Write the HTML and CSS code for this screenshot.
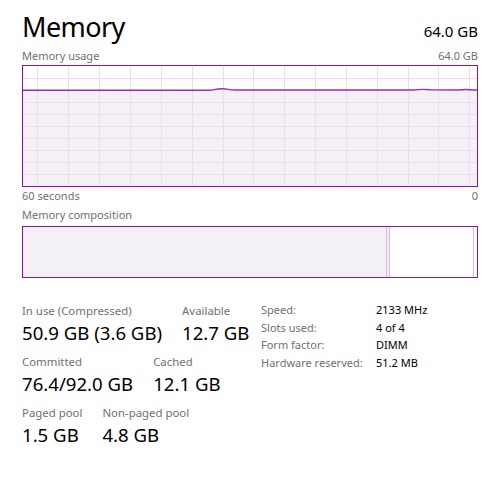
FILE: index.html
```html
<!DOCTYPE html>
<html>
<head>
<meta charset="utf-8">
<link rel="stylesheet" href="styles.css">
</head>
<body>
<div class="page">
  <div class="header">
    <div class="title">Memory</div>
    <div class="total">64.0 GB</div>
  </div>
  <div class="caption-row top-caption">
    <span>Memory usage</span>
    <span>64.0 GB</span>
  </div>
  <svg class="chart" width="456" height="122" viewBox="0 0 456 122">
    <rect x="0" y="25" width="456" height="97" fill="#f3f1f5"/>
    <g stroke="#ebdcf1" stroke-width="1">
      <line x1="0" y1="13.5" x2="456" y2="13.5"/>
      <line x1="0" y1="37.5" x2="456" y2="37.5"/>
      <line x1="0" y1="49.5" x2="456" y2="49.5"/>
      <line x1="0" y1="61.5" x2="456" y2="61.5"/>
      <line x1="0" y1="73.5" x2="456" y2="73.5"/>
      <line x1="0" y1="85.5" x2="456" y2="85.5"/>
      <line x1="0" y1="97.5" x2="456" y2="97.5"/>
      <line x1="0" y1="109.5" x2="456" y2="109.5"/>
      <line x1="15.5" y1="0" x2="15.5" y2="122"/>
      <line x1="46.5" y1="0" x2="46.5" y2="122"/>
      <line x1="77.5" y1="0" x2="77.5" y2="122"/>
      <line x1="108.5" y1="0" x2="108.5" y2="122"/>
      <line x1="139.5" y1="0" x2="139.5" y2="122"/>
      <line x1="170.5" y1="0" x2="170.5" y2="122"/>
      <line x1="201.5" y1="0" x2="201.5" y2="122"/>
      <line x1="231.5" y1="0" x2="231.5" y2="122"/>
      <line x1="262.5" y1="0" x2="262.5" y2="122"/>
      <line x1="293.5" y1="0" x2="293.5" y2="122"/>
      <line x1="324.5" y1="0" x2="324.5" y2="122"/>
      <line x1="355.5" y1="0" x2="355.5" y2="122"/>
      <line x1="386.5" y1="0" x2="386.5" y2="122"/>
      <line x1="416.5" y1="0" x2="416.5" y2="122"/>
      <line x1="447.5" y1="0" x2="447.5" y2="122"/>
    </g>
    <path d="M0 25.3 L188 25.3 C193 24.6 196 23.6 201 23.8 C205 24 208 24.8 213 25 L392 25 C396 24.4 402 24.2 408 24.8 L436 25 C440 24.4 446 24.2 452 25 L456 25" fill="none" stroke="#9a2cbc" stroke-width="1.4"/>
    <rect x="0.5" y="0.5" width="455" height="121" fill="none" stroke="#8b12ae" stroke-width="1"/>
  </svg>
  <div class="caption-row bottom-caption">
    <span>60 seconds</span>
    <span>0</span>
  </div>
  <div class="caption-row comp-caption">
    <span>Memory composition</span>
  </div>
  <svg class="composition" width="456" height="52" viewBox="0 0 456 52">
    <rect x="0" y="0" width="364" height="52" fill="#f3f1f5"/>
    <rect x="364" y="0" width="3" height="52" fill="#f2eaf4"/>
    <line x1="364.5" y1="0" x2="364.5" y2="52" stroke="#d9b9e3"/>
    <line x1="367.5" y1="0" x2="367.5" y2="52" stroke="#d9b9e3"/>
    <line x1="451.5" y1="0" x2="451.5" y2="52" stroke="#d9b9e3"/>
    <rect x="0.5" y="0.5" width="455" height="51" fill="none" stroke="#8b12ae" stroke-width="1"/>
  </svg>
  <div class="details">
    <div class="stats">
      <div class="stat-row">
        <div class="stat">
          <div class="label">In use (Compressed)</div>
          <div class="value">50.9 GB (3.6 GB)</div>
        </div>
        <div class="stat">
          <div class="label">Available</div>
          <div class="value">12.7 GB</div>
        </div>
      </div>
      <div class="stat-row">
        <div class="stat">
          <div class="label">Committed</div>
          <div class="value">76.4/92.0 GB</div>
        </div>
        <div class="stat">
          <div class="label">Cached</div>
          <div class="value">12.1 GB</div>
        </div>
      </div>
      <div class="stat-row">
        <div class="stat">
          <div class="label">Paged pool</div>
          <div class="value">1.5 GB</div>
        </div>
        <div class="stat">
          <div class="label">Non-paged pool</div>
          <div class="value">4.8 GB</div>
        </div>
      </div>
    </div>
    <div class="specs">
      <div class="spec-label">Speed:</div><div class="spec-value">2133 MHz</div>
      <div class="spec-label">Slots used:</div><div class="spec-value">4 of 4</div>
      <div class="spec-label">Form factor:</div><div class="spec-value">DIMM</div>
      <div class="spec-label">Hardware reserved:</div><div class="spec-value">51.2 MB</div>
    </div>
  </div>
</div>
</body>
</html>
```

FILE: styles.css
```css
html, body {
  margin: 0;
  padding: 0;
  background: #ffffff;
}
body {
  font-family: "Noto Sans", "Open Sans", sans-serif;
  color: #000000;
}
.page {
  width: 456px;
  padding: 8px 0 0 22px;
}
.header {
  display: flex;
  justify-content: space-between;
  align-items: baseline;
  height: 40px;
}
.title {
  font-size: 27px;
  letter-spacing: -0.6px;
  line-height: 38px;
}
.total {
  font-size: 15px;
  line-height: 20px;
}
.caption-row {
  display: flex;
  justify-content: space-between;
  font-size: 11px;
  color: #707070;
  line-height: 15px;
}
.top-caption {
  height: 17px;
}
.chart, .composition {
  display: block;
}
.bottom-caption {
  margin-top: 1px;
  height: 17px;
}
.comp-caption {
  height: 21px;
  align-items: flex-start;
  padding-top: 2px;
  box-sizing: border-box;
}
.details {
  display: flex;
  margin-top: 25px;
}
.stats {
  width: 239px;
  display: flex;
  flex-direction: column;
  gap: 7px;
}
.stat-row {
  display: flex;
  gap: 20px;
}
.label {
  font-size: 11.4px;
  line-height: 16px;
  color: #707070;
}
.value {
  font-size: 18.6px;
  line-height: 28px;
  color: #000000;
}
.specs {
  display: grid;
  grid-template-columns: 115px auto;
  grid-auto-rows: 17.7px;
  margin-top: -1px;
  font-size: 11px;
  line-height: 16px;
}
.spec-label {
  color: #707070;
}
.spec-value {
  color: #000000;
}
```
